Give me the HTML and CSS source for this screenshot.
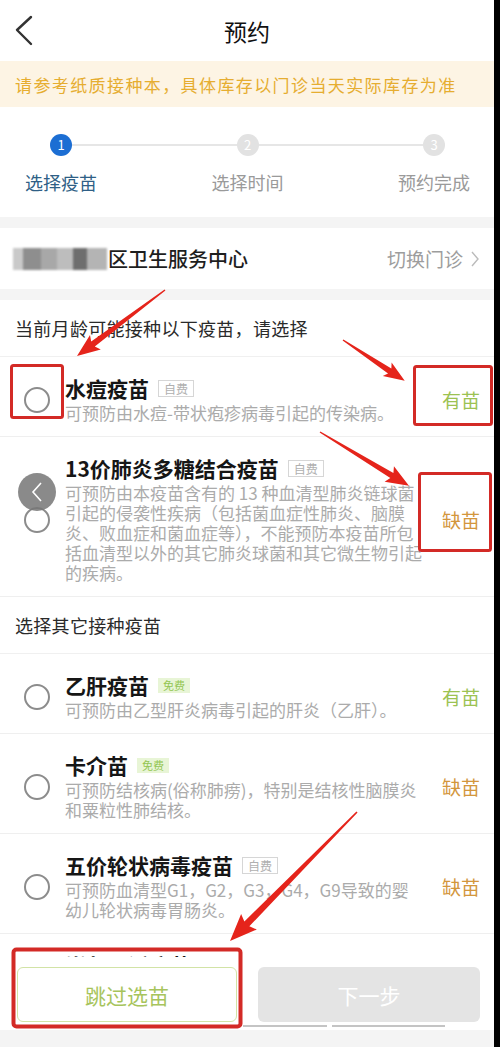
FILE: index.html
```html
<!DOCTYPE html>
<html lang="zh-CN">

<head>
    <meta charset="UTF-8">
    <meta name="viewport" content="width=device-width, initial-scale=1.0">
    <title>预约</title>
    <link rel="stylesheet" href="styles.css">
</head>

<body>

    <div class="app">
        <!-- top nav -->
        <div class="nav">
            <svg class="nav-back" width="20" height="32" viewBox="0 0 20 32">
                <polyline points="17,2 3,15 17,29" fill="none" stroke="#333" stroke-width="2.4" stroke-linecap="round" stroke-linejoin="round" />
            </svg>
            <div class="nav-title">预约</div>
        </div>

        <div class="notice">请参考纸质接种本，具体库存以门诊当天实际库存为准</div>

        <!-- steps -->
        <div class="steps">
            <div class="steps-track">
                <span class="dot active">1</span>
                <span class="track-line"></span>
                <span class="dot">2</span>
                <span class="track-line"></span>
                <span class="dot">3</span>
            </div>
            <div class="steps-labels">
                <span class="active">选择疫苗</span>
                <span>选择时间</span>
                <span>预约完成</span>
            </div>
        </div>

        <div class="gap"></div>

        <div class="clinic">
            <div class="clinic-name">
                <span class="mosaic">
                    <i class="m1"></i><i class="m2"></i><i class="m3"></i><i class="m4"></i><i class="m5"></i><i class="m6"></i>
                </span>
                区卫生服务中心
            </div>
            <div class="clinic-switch">
                切换门诊
                <svg width="10" height="18" viewBox="0 0 10 18">
                    <polyline points="2,2 8,9 2,16" fill="none" stroke="#bbb" stroke-width="1.4" />
                </svg>
            </div>
        </div>

        <div class="gap"></div>

        <div class="section-title">当前月龄可能接种以下疫苗，请选择</div>

        <div class="item">
            <span class="radio"></span>
            <div class="item-body">
                <div class="item-name">水痘疫苗<span class="tag">自费</span></div>
                <div class="item-desc">可预防由水痘-带状疱疹病毒引起的传染病。</div>
            </div>
            <div class="item-status ok">有苗</div>
        </div>

        <div class="item">
            <span class="radio"></span>
            <div class="item-body">
                <div class="item-name">13价肺炎多糖结合疫苗<span class="tag">自费</span></div>
                <div class="item-desc">可预防由本疫苗含有的 13 种血清型肺炎链球菌引起的侵袭性疾病（包括菌血症性肺炎、脑膜炎、败血症和菌血症等），不能预防本疫苗所包括血清型以外的其它肺炎球菌和其它微生物引起的疾病。</div>
            </div>
            <div class="item-status out">缺苗</div>
        </div>

        <div class="section-title">选择其它接种疫苗</div>

        <div class="item">
            <span class="radio"></span>
            <div class="item-body">
                <div class="item-name">乙肝疫苗<span class="tag free">免费</span></div>
                <div class="item-desc">可预防由乙型肝炎病毒引起的肝炎（乙肝）。</div>
            </div>
            <div class="item-status ok">有苗</div>
        </div>

        <div class="item">
            <span class="radio"></span>
            <div class="item-body">
                <div class="item-name">卡介苗<span class="tag free">免费</span></div>
                <div class="item-desc">可预防结核病(俗称肺痨)，特别是结核性脑膜炎和粟粒性肺结核。</div>
            </div>
            <div class="item-status out">缺苗</div>
        </div>

        <div class="item">
            <span class="radio"></span>
            <div class="item-body">
                <div class="item-name">五价轮状病毒疫苗<span class="tag">自费</span></div>
                <div class="item-desc">可预防血清型G1，G2，G3，G4，G9导致的婴<br>幼儿轮状病毒胃肠炎。</div>
            </div>
            <div class="item-status out">缺苗</div>
        </div>

        <div class="item">
            <span class="radio"></span>
            <div class="item-body">
                <div class="item-name">脊灰灭活疫苗<span class="tag">自费</span></div>
                <div class="item-desc">可预防脊髓灰质炎。</div>
            </div>
            <div class="item-status ok">有苗</div>
        </div>

        <!-- floating back button -->
        <div class="float-back">
            <svg width="14" height="22" viewBox="0 0 14 22">
                <polyline points="11,2 3,11 11,20" fill="none" stroke="#fff" stroke-width="1.6" />
            </svg>
        </div>
    </div>

    <!-- bottom buttons -->
    <div class="footer">
        <div class="footer-btns">
            <button type="button" class="btn-skip">跳过选苗</button>
            <button type="button" class="btn-next">下一步</button>
        </div>
        <div class="footer-lines"><span class="l1"></span><span class="l2"></span></div>
        <div class="footer-bottom"></div>
    </div>

    <!-- red annotation marks -->
    <svg class="marks" width="500" height="1047" viewBox="0 0 500 1047">
        <g fill="#e5241b">
            <polygon transform="translate(165,290) rotate(143.13)" points="0,-0.7 90,-3 87,-9 110,0 87,9 90,3 0,0.7" />
            <polygon transform="translate(343,340) rotate(33.5)" points="0,-0.7 56,-3 53,-8 74,0 53,8 56,3 0,0.7" />
            <polygon transform="translate(320,432) rotate(31.2)" points="0,-0.7 84,-3 81,-9 104,0 81,9 84,3 0,0.7" />
            <polygon transform="translate(357,812) rotate(134.55)" points="0,-0.8 157,-3.5 154,-11 181,0 154,11 157,3.5 0,0.8" />
        </g>
        <g fill="none" stroke="#d32a26" stroke-width="3">
            <rect x="11.5" y="365.5" width="51" height="52" rx="2" />
            <rect x="414.5" y="366.5" width="77" height="58" rx="2" />
            <rect x="419.5" y="473.5" width="71" height="77" rx="2" />
            <rect x="13.5" y="949.5" width="227" height="77" rx="3" stroke-width="4" />
        </g>
    </svg>

</body>

</html>
```

FILE: styles.css
```css
* {
    box-sizing: border-box;
}

body {
    margin: 0;
    background: #000;
    overflow: hidden;
    font-family: "Noto Sans CJK SC", "Noto Sans", sans-serif;
    color: #222;
}

.app {
    width: 494px;
    min-height: 1047px;
    background: #fff;
    position: relative;
}

/* nav */
.nav {
    height: 61px;
    display: flex;
    align-items: center;
    padding-left: 14px;
}

.nav-back {
    display: block;
}

.nav-title {
    flex: 1;
    text-align: center;
    font-size: 23px;
    color: #111;
    margin-right: 34px;
}

.notice {
    height: 46px;
    display: flex;
    align-items: center;
    padding-left: 15px;
    background: #fdf4e4;
    color: #e6ad30;
    font-size: 17px;
    letter-spacing: 1.4px;
    white-space: nowrap;
}

/* steps */
.steps {
    height: 110px;
    padding-top: 27px;
}

.steps-track {
    display: flex;
    align-items: center;
    padding: 0 49px 0 50px;
}

.dot {
    width: 22px;
    height: 22px;
    border-radius: 50%;
    background: #e2e2e2;
    color: #fff;
    font-size: 13px;
    line-height: 22px;
    text-align: center;
}

.dot.active {
    background: #1c6ed3;
}

.track-line {
    flex: 1;
    height: 2px;
    background: #e6e6e6;
}

.steps-labels {
    display: flex;
    justify-content: space-between;
    padding: 0 24px 0 25px;
    margin-top: 14px;
    font-size: 18px;
    line-height: 24px;
    color: #9a9a9a;
}

.steps-labels .active {
    color: #2f5f86;
}

.gap {
    height: 11px;
    background: #f4f4f4;
}

/* clinic */
.clinic {
    height: 61px;
    display: flex;
    align-items: center;
    justify-content: space-between;
    padding: 0 14px 0 13px;
}

.clinic-name {
    display: flex;
    align-items: center;
    font-size: 20px;
    font-weight: 500;
    color: #1e1e1e;
}

.mosaic {
    display: flex;
    height: 22px;
    margin-right: 1px;
    filter: blur(0.8px);
}

.mosaic i {
    display: block;
    height: 22px;
}

.mosaic .m1 { width: 10px; background: #c9c9c9; }
.mosaic .m2 { width: 18px; background: #8e8e8e; }
.mosaic .m3 { width: 16px; background: #a8a8a8; }
.mosaic .m4 { width: 16px; background: #bdbdbd; }
.mosaic .m5 { width: 14px; background: #6e6e6e; }
.mosaic .m6 { width: 20px; background: #b4b4b4; }

.clinic-switch {
    display: flex;
    align-items: center;
    gap: 7px;
    font-size: 19px;
    color: #9d9d9d;
}

/* vaccine list */
.section-title {
    height: 57px;
    display: flex;
    align-items: center;
    padding-left: 15px;
    font-size: 18px;
    letter-spacing: 0.3px;
    color: #2a2a2a;
    border-bottom: 1px solid #f0f0f0;
}

.item {
    display: flex;
    align-items: center;
    padding: 19px 14px 13px 24px;
    border-bottom: 1px solid #efefef;
}

.radio {
    flex: 0 0 26px;
    height: 26px;
    border: 2px solid #8c8c8c;
    border-radius: 50%;
    margin-right: 15px;
}

.item-body {
    flex: 0 0 358px;
}

.item-name {
    display: flex;
    align-items: center;
    font-size: 21px;
    line-height: 24px;
    font-weight: 700;
    color: #161616;
}

.tag {
    margin-left: 9px;
    padding: 0 5px;
    height: 17px;
    line-height: 15px;
    border: 1px solid #d6d6d6;
    font-size: 12px;
    font-weight: 400;
    color: #b0b0b0;
}

.tag.free {
    border-color: #e8f5d6;
    background: #e8f5d6;
    color: #93c552;
    height: 15px;
    line-height: 13px;
    font-size: 11px;
    padding: 0 4px;
}

.item-desc {
    margin-top: 3px;
    font-size: 17px;
    line-height: 20px;
    color: #ababab;
}

.item-status {
    flex: 1;
    text-align: right;
    font-size: 19px;
}

.item-status.ok {
    color: #9cc252;
}

.item-status.out {
    color: #d3963d;
}

.float-back {
    position: absolute;
    left: 18px;
    top: 473px;
    width: 38px;
    height: 38px;
    border-radius: 50%;
    background: rgba(118, 118, 118, 0.85);
    display: flex;
    align-items: center;
    justify-content: center;
}

/* footer */
.footer {
    position: fixed;
    left: 0;
    bottom: 0;
    width: 494px;
    background: #fff;
}

.footer-btns {
    display: flex;
    gap: 21px;
    padding: 10px 14px 0 17px;
}

.footer-btns button {
    height: 55px;
    border-radius: 6px;
    font-family: inherit;
    font-size: 21px;
}

.btn-skip {
    flex: 0 0 220px;
    background: #fff;
    border: 1.5px solid #d2e3a6;
    color: #a7c45c;
}

.btn-next {
    flex: 1;
    background: #e4e4e4;
    border: none;
    color: #fff;
}

.footer-lines {
    height: 8px;
    display: flex;
    align-items: center;
    gap: 5px;
    padding-left: 243px;
}

.footer-lines span {
    height: 2px;
    background: #c4c4c4;
}

.footer-lines .l1 {
    width: 84px;
}

.footer-lines .l2 {
    width: 113px;
}

.footer-bottom {
    height: 17px;
    background: #f4f4f4;
}

.marks {
    position: absolute;
    left: 0;
    top: 0;
    z-index: 10;
}
```
